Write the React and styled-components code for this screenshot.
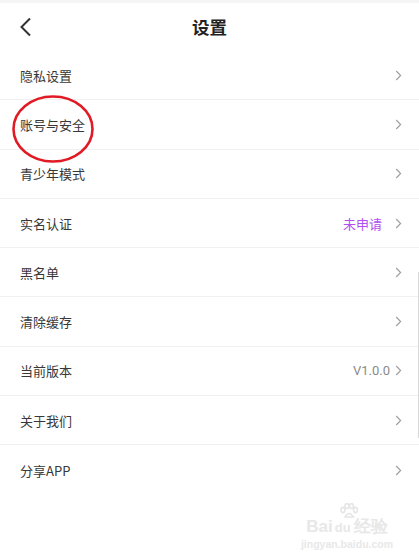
import React from 'react';
import styled, { createGlobalStyle } from 'styled-components';

const GlobalStyle = createGlobalStyle`
  html, body {
    margin: 0;
    padding: 0;
    background: #ffffff;
  }
  body {
    font-family: "Noto Sans CJK SC", "Noto Sans", sans-serif;
  }
`;

const items = [
  { label: '隐私设置' },
  { label: '账号与安全' },
  { label: '青少年模式' },
  { label: '实名认证', value: '未申请', accent: true },
  { label: '黑名单' },
  { label: '清除缓存' },
  { label: '当前版本', value: 'V1.0.0' },
  { label: '关于我们' },
  { label: '分享APP', last: true },
];

const Chevron = () => (
  <svg width="7" height="11" viewBox="0 0 7 11">
    <path d="M1.2 1 L5.6 5.5 L1.2 10" fill="none" stroke="#a0a0a0" strokeWidth="1.2" />
  </svg>
);

const BackIcon = () => (
  <svg width="14" height="20" viewBox="0 0 14 20">
    <path d="M11 1.5 L2.5 10 L11 18.5" fill="none" stroke="#333" strokeWidth="2" />
  </svg>
);

const Paw = () => (
  <svg width="20" height="16" viewBox="0 0 20 16">
    <g fill="none" stroke="#e6e6e6" strokeWidth="1.6">
      <ellipse cx="4" cy="7" rx="2" ry="2.6" />
      <ellipse cx="8" cy="3" rx="2" ry="2.4" />
      <ellipse cx="12.5" cy="3" rx="2" ry="2.4" />
      <ellipse cx="16.5" cy="7" rx="2" ry="2.6" />
      <path d="M6 14 Q10 7 14.5 14 Z" />
    </g>
  </svg>
);

const App = () => {
  return (
    <Page>
      <GlobalStyle />
      <StatusStrip />
      <Header>
        <BackButton>
          <BackIcon />
        </BackButton>
        <Title>设置</Title>
      </Header>
      <List>
        {items.map((item) => (
          <Row key={item.label} last={item.last}>
            <Label>{item.label}</Label>
            <Right>
              {item.value && <Value accent={item.accent}>{item.value}</Value>}
              <Chevron />
            </Right>
          </Row>
        ))}
      </List>
      <Circle width="84" height="70" viewBox="0 0 84 70">
        <ellipse cx="42" cy="35" rx="39.5" ry="32.5" fill="none" stroke="#e01b24" strokeWidth="2.6" />
      </Circle>
      <ScrollBar />
      <Watermark>
        <PawSlot>
          <Paw />
        </PawSlot>
        <WatermarkLogo>Bai<Du>du</Du>经验</WatermarkLogo>
        <WatermarkUrl>jingyan.baidu.com</WatermarkUrl>
      </Watermark>
    </Page>
  );
};

const Page = styled.div`
  position: relative;
  width: 419px;
  height: 557px;
  overflow: hidden;
  background: #fff;
`;

const StatusStrip = styled.div`
  height: 3px;
  background: #f5f5f5;
`;

const Header = styled.div`
  position: relative;
  height: 48px;
  display: flex;
  align-items: center;
  justify-content: center;
`;

const BackButton = styled.div`
  position: absolute;
  left: 19px;
  top: 14px;
  display: flex;
`;

const Title = styled.div`
  font-size: 17.5px;
  font-weight: 700;
  color: #222;
  margin-top: -1px;
`;

const List = styled.div`
  display: flex;
  flex-direction: column;
`;

const Row = styled.div`
  height: 49.3px;
  box-sizing: border-box;
  display: flex;
  align-items: center;
  justify-content: space-between;
  padding: 0 17px 0 20px;
  border-bottom: ${(p) => (p.last ? 'none' : '1px solid #f0f0f0')};
`;

const Label = styled.div`
  font-size: 13px;
  color: #383838;
`;

const Right = styled.div`
  display: flex;
  align-items: center;
  gap: 5px;
`;

const Value = styled.div`
  font-size: 13px;
  color: ${(p) => (p.accent ? '#b24ef2' : '#8a8a8a')};
  margin-right: ${(p) => (p.accent ? '8px' : '0')};
  font-family: ${(p) => (p.accent ? '"Noto Sans CJK SC", sans-serif' : 'Roboto, "Noto Sans", sans-serif')};
`;

const Circle = styled.svg`
  position: absolute;
  left: 11px;
  top: 94px;
`;

const ScrollBar = styled.div`
  position: absolute;
  right: 0;
  top: 272px;
  width: 1px;
  height: 166px;
  background: #d8d8d8;
`;

const Watermark = styled.div`
  position: absolute;
  left: 300px;
  top: 503px;
  width: 94px;
  display: flex;
  flex-direction: column;
  align-items: center;
  color: #e8e8e8;
`;

const PawSlot = styled.div`
  display: flex;
  margin-left: 4px;
  height: 15px;
`;

const WatermarkLogo = styled.div`
  font-family: "Liberation Sans", sans-serif;
  font-size: 17px;
  line-height: 17px;
  font-weight: 700;
  white-space: nowrap;
`;

const Du = styled.span`
  font-size: 13px;
  margin: 0 3px 0 2px;
`;

const WatermarkUrl = styled.div`
  font-family: "Liberation Sans", sans-serif;
  font-size: 10.5px;
  font-weight: 700;
  margin-top: 2px;
`;

export default App;
